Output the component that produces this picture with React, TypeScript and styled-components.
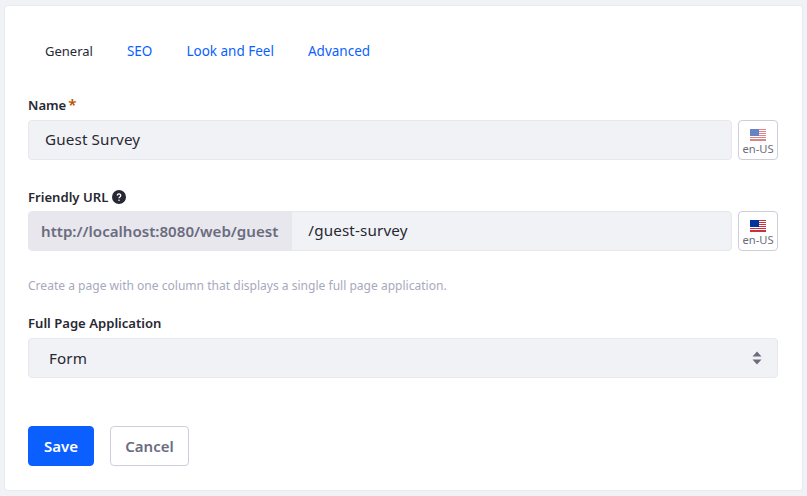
import React from 'react'
import styled, { createGlobalStyle } from 'styled-components'

const GlobalStyle = createGlobalStyle`
  html, body {
    margin: 0;
    padding: 0;
    background: #f1f2f5;
    font-family: "Noto Sans", "Open Sans", sans-serif;
  }
`

const Page = styled.div`
  width: 807px;
  height: 496px;
  box-sizing: border-box;
  padding: 5px 4px 5px 4px;
  overflow: hidden;
`

const Card = styled.div`
  height: 486px;
  box-sizing: border-box;
  background: #fff;
  border-radius: 4px;
  border: 1px solid #e9eaef;
  padding: 26px 24px 0 23px;
`

const Tabs = styled.ul`
  display: flex;
  list-style: none;
  margin: 0 0 26px;
  padding: 0;
  height: 38px;
`

const Tab = styled.li<{ $active?: boolean }>`
  padding: 0 17px;
  height: 38px;
  line-height: 38px;
  font-size: ${p => (p.$active ? '13px' : '13.5px')};
  color: ${p => (p.$active ? '#272833' : '#0b5fff')};
`

const Field = styled.div<{ $gap: number }>`
  margin-bottom: ${p => p.$gap}px;
`

const Label = styled.div<{ $tight?: boolean }>`
  display: flex;
  align-items: center;
  height: 18px;
  margin-bottom: ${p => (p.$tight ? 5 : 6)}px;
  font-size: 13.1px;
  font-weight: 600;
  color: #272833;
`

const Required = styled.span`
  color: #b95000;
  margin-left: 2px;
  font-size: 15px;
  line-height: 18px;
  position: relative;
  top: -1px;
`

const HelpIcon = styled.svg`
  margin-left: 4px;
  width: 14px;
  height: 14px;
`

const Row = styled.div`
  display: flex;
  gap: 6px;
`

const InputGroup = styled.div`
  flex: 1;
  display: flex;
  height: 40px;
  box-sizing: border-box;
  background: #f1f2f5;
  border: 1px solid #e7e7ed;
  border-radius: 4px;
  overflow: hidden;
`

const Prefix = styled.div`
  display: flex;
  align-items: center;
  padding: 0 14px 0 13px;
  margin: -1px 0 -1px -1px;
  background: #e7e7ed;
  font-size: 15.1px;
  font-weight: 600;
  color: #6b6c7e;
`

const Value = styled.div`
  display: flex;
  align-items: center;
  padding: 0 0 2px 16px;
  font-size: 15.2px;
  letter-spacing: 0.15px;
  color: #272833;
`

const LocaleButton = styled.div`
  width: 40px;
  height: 40px;
  box-sizing: border-box;
  border: 1px solid #cdced9;
  border-radius: 4px;
  background: #fff;
  display: flex;
  flex-direction: column;
  align-items: center;
  padding-top: 8px;
`

const FlagIcon = styled.svg<{ $faded?: boolean }>`
  width: 16px;
  height: 12px;
  opacity: ${p => (p.$faded ? 0.6 : 1)};
`

const LocaleText = styled.span`
  font-size: 11.2px;
  line-height: 13px;
  margin-top: 1px;
  color: #6b6c7e;
`

const Hint = styled.p`
  margin: 0 0 19px;
  height: 18px;
  line-height: 18px;
  font-size: 12.05px;
  color: #a7a9bc;
`

const SelectBox = styled(InputGroup)`
  flex: none;
  justify-content: space-between;
  align-items: center;
  padding: 0 15px 0 20px;
  font-size: 15.2px;
  letter-spacing: 0.15px;
  color: #272833;
`

const Chevrons = styled.svg`
  width: 10px;
  height: 14px;
`

const Actions = styled.div`
  display: flex;
  gap: 16px;
  margin-top: 48px;
`

const Button = styled.button<{ $primary?: boolean }>`
  height: 40px;
  box-sizing: border-box;
  border-radius: 4px;
  font-family: inherit;
  font-size: 15px;
  font-weight: 600;
  padding: 0;
  width: ${p => (p.$primary ? '66px' : '79px')};
  background: ${p => (p.$primary ? '#0b5fff' : '#fff')};
  color: ${p => (p.$primary ? '#fff' : '#6b6c7e')};
  border: 1px solid ${p => (p.$primary ? '#0b5fff' : '#cdced9')};
`

const Flag = ({ faded }: { faded?: boolean }) => (
  <FlagIcon $faded={faded} viewBox="0 0 16 12">
    <rect width="16" height="12" fill="#fff" />
    {[0, 2, 4, 6, 8, 10].map(y => (
      <rect key={y} y={y} width="16" height="1" fill="#c8313e" />
    ))}
    <rect y="11" width="16" height="1" fill="#c8313e" />
    <rect width="9" height="7" fill="#0033a0" />
  </FlagIcon>
)

const Locale = ({ faded }: { faded?: boolean }) => (
  <LocaleButton>
    <Flag faded={faded} />
    <LocaleText>en-US</LocaleText>
  </LocaleButton>
)

export default function App() {
  return (
    <Page>
      <GlobalStyle />
      <Card>
        <Tabs>
          <Tab $active>General</Tab>
          <Tab>SEO</Tab>
          <Tab>Look and Feel</Tab>
          <Tab>Advanced</Tab>
        </Tabs>

        <Field $gap={28}>
          <Label>
            Name<Required>*</Required>
          </Label>
          <Row>
            <InputGroup>
              <Value>Guest Survey</Value>
            </InputGroup>
            <Locale faded />
          </Row>
        </Field>

        <Field $gap={26}>
          <Label $tight>
            Friendly URL
            <HelpIcon viewBox="0 0 14 14">
              <circle cx="7" cy="7" r="7" fill="#272833" />
              <path d="M5.3 5.6a1.7 1.7 0 1 1 2.6 1.4c-.6.4-.9.7-.9 1.2" fill="none" stroke="#fff" strokeWidth="1.3" />
              <circle cx="7" cy="10.2" r=".8" fill="#fff" />
            </HelpIcon>
          </Label>
          <Row>
            <InputGroup>
              <Prefix>http://localhost:8080/web/guest</Prefix>
              <Value>/guest-survey</Value>
            </InputGroup>
            <Locale />
          </Row>
        </Field>

        <Hint>Create a page with one column that displays a single full page application.</Hint>

        <Field $gap={0}>
          <Label>Full Page Application</Label>
          <SelectBox>
            Form
            <Chevrons viewBox="0 0 10 14">
              <path d="M5 0.5 9.5 5.5H0.5Z M5 13.5 0.5 8.5H9.5Z" fill="#6b6c7e" />
            </Chevrons>
          </SelectBox>
        </Field>

        <Actions>
          <Button $primary>Save</Button>
          <Button>Cancel</Button>
        </Actions>
      </Card>
    </Page>
  )
}
